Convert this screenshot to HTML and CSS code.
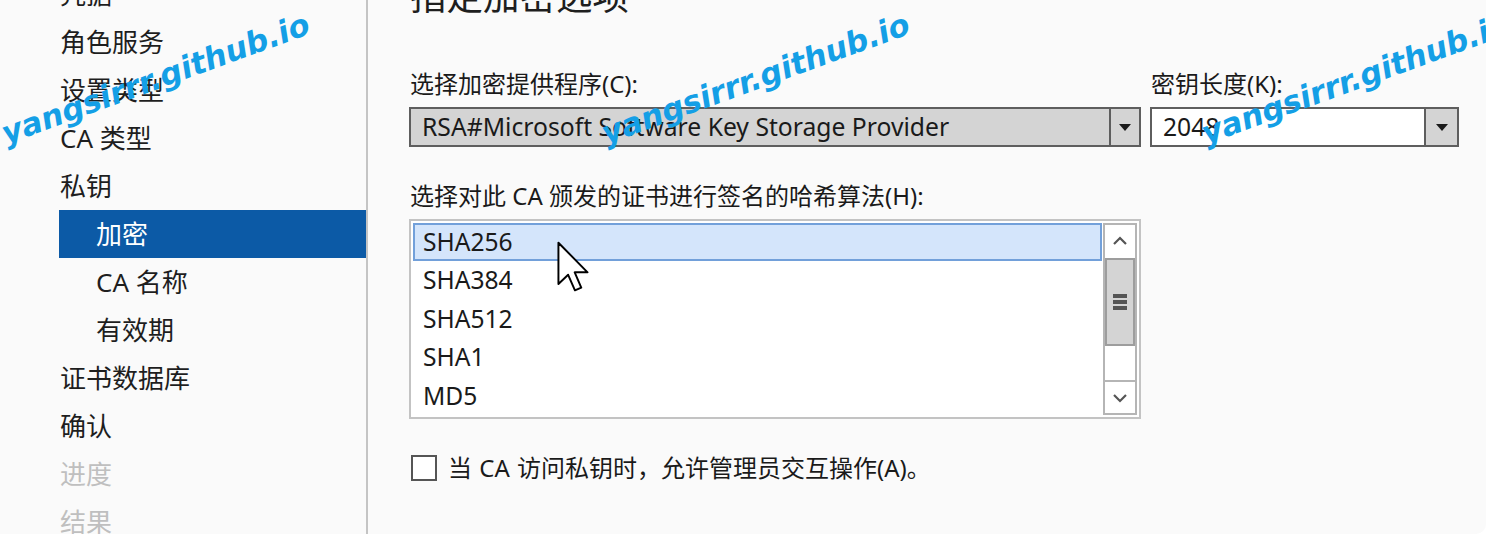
FILE: index.html
```html
<!DOCTYPE html>
<html lang="zh-CN">
<head>
<meta charset="utf-8">
<title>加密选项</title>
<link rel="stylesheet" href="styles.css">
</head>
<body>
<div class="window">
  <nav class="nav">
    <ul class="nav-list">
      <li class="nav-item">凭据</li>
      <li class="nav-item">角色服务</li>
      <li class="nav-item">设置类型</li>
      <li class="nav-item">CA 类型</li>
      <li class="nav-item">私钥</li>
      <li class="nav-item sub active">加密</li>
      <li class="nav-item sub">CA 名称</li>
      <li class="nav-item sub">有效期</li>
      <li class="nav-item">证书数据库</li>
      <li class="nav-item">确认</li>
      <li class="nav-item disabled">进度</li>
      <li class="nav-item disabled">结果</li>
    </ul>
  </nav>
  <main class="main">
    <h1 class="heading">指定加密选项</h1>
    <div class="combo-row">
      <div class="field field-provider">
        <label class="label">选择加密提供程序(C):</label>
        <div class="combo combo-readonly">
          <span class="combo-text">RSA#Microsoft Software Key Storage Provider</span>
          <span class="combo-btn"><span class="tri"></span></span>
        </div>
      </div>
      <div class="field field-length">
        <label class="label">密钥长度(K):</label>
        <div class="combo combo-edit">
          <span class="combo-text">2048</span>
          <span class="combo-btn wide"><span class="tri"></span></span>
        </div>
      </div>
    </div>
    <label class="label hash-label">选择对此 CA 颁发的证书进行签名的哈希算法(H):</label>
    <div class="listbox">
      <ul class="items">
        <li class="item selected">SHA256</li>
        <li class="item">SHA384</li>
        <li class="item">SHA512</li>
        <li class="item">SHA1</li>
        <li class="item">MD5</li>
      </ul>
      <div class="scrollbar">
        <div class="sb-btn">
          <svg width="16" height="10" viewBox="0 0 16 10"><path d="M2 8 L8 2 L14 8" fill="none" stroke="#555" stroke-width="2.2"/></svg>
        </div>
        <div class="sb-thumb"><span class="grip"></span><span class="grip"></span><span class="grip"></span></div>
        <div class="sb-track"></div>
        <div class="sb-btn sb-down">
          <svg width="16" height="10" viewBox="0 0 16 10"><path d="M2 2 L8 8 L14 2" fill="none" stroke="#555" stroke-width="2.2"/></svg>
        </div>
      </div>
    </div>
    <div class="check-row">
      <span class="checkbox"></span>
      <span class="check-text">当 CA 访问私钥时，允许管理员交互操作(A)。</span>
    </div>
  </main>

  <svg class="cursor" width="34" height="54" viewBox="-1 -1 14 22">
    <path d="M0 0 L0 17 L4 13.2 L6.8 19.6 L9.4 18.5 L6.7 12.2 L12 12.2 Z" fill="#fff" stroke="#000" stroke-width="0.8" stroke-linejoin="round"/>
  </svg>

  <span class="wm wm-1">yangsirrr.github.io</span>
  <span class="wm wm-2">yangsirrr.github.io</span>
  <span class="wm wm-3">yangsirrr.github.io</span>
</div>
</body>
</html>
```

FILE: styles.css
```css
* { box-sizing: border-box; }
html, body { margin: 0; padding: 0; }
body {
  background: #ffffff;
  font-family: "Noto Sans", "Noto Sans CJK SC", sans-serif;
  color: #1a1a1a;
}
.window {
  position: relative;
  width: 1486px;
  height: 534px;
  background: #fafafa;
  display: flex;
  overflow: hidden;
  border-bottom-right-radius: 10px;
}

/* navigation */
.nav {
  width: 368px;
  flex: none;
  border-right: 2px solid #c4c4c4;
  padding-left: 59px;
}
.nav-list {
  list-style: none;
  margin: -30px 0 0 0;
  padding: 0;
}
.nav-item {
  height: 48px;
  line-height: 48px;
  font-size: 26px;
  padding-left: 1px;
  color: #1e1e1e;
  white-space: nowrap;
}
.nav-item.sub { padding-left: 37px; }
.nav-item.active { background: #0c5aa6; color: #ffffff; }
.nav-item.disabled { color: #bfbfbf; }

/* main */
.main {
  flex: 1;
  padding-left: 41px;
}
.heading {
  margin: -26px 0 0 1px;
  font-size: 36.5px;
  font-weight: normal;
  line-height: 44px;
  color: #1e1e1e;
}
.label {
  display: block;
  font-size: 24px;
  line-height: 30px;
  color: #1a1a1a;
  padding-left: 1px;
  white-space: nowrap;
}
.combo-row {
  display: flex;
  gap: 9px;
  margin-top: 51px;
}
.field-provider { width: 732px; }
.field-length { width: 309px; }
.combo {
  margin-top: 8px;
  height: 40px;
  border: 2px solid #5e5e5e;
  display: flex;
  align-items: stretch;
}
.combo-readonly { background: #d4d4d4; }
.combo-edit { background: #ffffff; }
.combo-text {
  flex: 1;
  padding-left: 11px;
  font-size: 24.7px;
  line-height: 35px;
  color: #1a1a1a;
  white-space: nowrap;
  overflow: hidden;
}
.combo-btn {
  width: 30px;
  flex: none;
  border-left: 2px solid #5e5e5e;
  background: #d4d4d4;
  display: flex;
  align-items: center;
  justify-content: center;
}
.combo-btn.wide { width: 33px; }
.tri {
  width: 0;
  height: 0;
  border-left: 6px solid transparent;
  border-right: 6px solid transparent;
  border-top: 7px solid #1a1a1a;
}

.hash-label { margin-top: 34px; }
.listbox {
  margin-top: 8px;
  width: 732px;
  height: 200px;
  border: 2px solid #c3c3c3;
  background: #ffffff;
  padding: 2px;
  display: flex;
  gap: 1px;
}
.items {
  list-style: none;
  margin: 0;
  padding: 0;
  flex: 1;
}
.item {
  height: 38.4px;
  line-height: 33px;
  padding-left: 8px;
  font-size: 24.6px;
  color: #1a1a1a;
  border: 2px solid transparent;
}
.item.selected {
  background: #d4e5fb;
  border-color: #72a0da;
}
.scrollbar {
  width: 34px;
  flex: none;
  border: 2px solid #b5b5b5;
  display: flex;
  flex-direction: column;
  background: #ffffff;
}
.sb-btn {
  height: 31px;
  flex: none;
  display: flex;
  align-items: center;
  justify-content: center;
}
.sb-down { border-top: 2px solid #b5b5b5; height: 33px; }
.sb-thumb {
  height: 88px;
  flex: none;
  margin-top: 2px;
  background: #d4d4d4;
  border: 2px solid #9d9d9d;
  display: flex;
  flex-direction: column;
  align-items: center;
  justify-content: center;
  gap: 2px;
}
.grip {
  width: 14px;
  height: 4px;
  background: #555555;
}
.sb-track { flex: 1; }

.check-row {
  margin-top: 34px;
  display: flex;
  align-items: center;
  gap: 11px;
  padding-left: 2px;
}
.checkbox {
  width: 26px;
  height: 26px;
  border: 2px solid #555555;
  background: #ffffff;
  flex: none;
}
.check-text {
  font-size: 24px;
  line-height: 30px;
  color: #1a1a1a;
  white-space: nowrap;
  word-spacing: 1px;
}

/* overlays */
.cursor {
  position: absolute;
  left: 556px;
  top: 240px;
}
.wm {
  position: absolute;
  font-family: "DejaVu Sans", sans-serif;
  font-weight: bold;
  font-style: italic;
  font-size: 31px;
  line-height: 31px;
  color: #149fe6;
  white-space: nowrap;
  transform: rotate(-20deg);
  transform-origin: 0 100%;
}
.wm-1 { left: 8px; top: 118px; }
.wm-2 { left: 608px; top: 118px; }
.wm-3 { left: 1208px; top: 118px; }
```
